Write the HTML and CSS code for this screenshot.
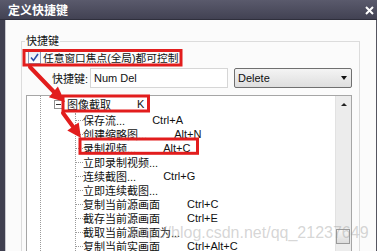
FILE: index.html
```html
<!DOCTYPE html>
<html lang="zh-CN">

<head>
    <meta charset="UTF-8">
    <meta name="viewport" content="width=device-width, initial-scale=1.0">
    <title>定义快捷键</title>
    <link rel="stylesheet" href="styles.css">
</head>

<body>
    <div class="window">
        <div class="titlebar">
            <span class="title">定义快捷键</span>
            <svg class="close" width="9" height="9" viewBox="0 0 9 9">
                <path d="M1 1 L8 8 M8 1 L1 8" stroke="#fff" stroke-width="2" />
            </svg>
        </div>
        <div class="frame">
            <div class="content">
                <fieldset class="group">
                    <legend>快捷键</legend>
                    <div class="check-row">
                        <span class="checkbox">
                            <svg width="11" height="11" viewBox="0 0 11 11">
                                <path d="M2 5.5 L4.5 8.5 L9 2" stroke="#2a4fa8" stroke-width="1.6" fill="none" />
                            </svg>
                        </span>
                        <span>任意窗口焦点(全局)都可控制</span>
                    </div>
                    <div class="key-row">
                        <span class="key-label">快捷键:</span>
                        <div class="input">Num Del</div>
                        <div class="select">
                            <span>Delete</span>
                            <span class="arrow"></span>
                        </div>
                    </div>
                    <div class="tree">
                        <div class="tree-body">
                            <div class="root-row">
                                <span class="minus"></span>
                                <span class="root-name">图像截取</span>
                                <span class="root-key">K</span>
                            </div>
                            <div class="children">
                                <div class="node"><span>保存流...</span><span class="key">Ctrl+A</span></div>
                                <div class="node"><span>创建缩略图...</span><span class="key">Alt+N</span></div>
                                <div class="node"><span>录制视频...</span><span class="key">Alt+C</span></div>
                                <div class="node"><span>立即录制视频...</span></div>
                                <div class="node"><span>连续截图...</span><span class="key">Ctrl+G</span></div>
                                <div class="node"><span>立即连续截图...</span></div>
                                <div class="node"><span>复制当前源画面</span><span class="key">Ctrl+C</span></div>
                                <div class="node"><span>截存当前源画面</span><span class="key">Ctrl+E</span></div>
                                <div class="node"><span>截取当前源画面为...</span></div>
                                <div class="node"><span>复制当前实画面</span><span class="key">Ctrl+Alt+C</span></div>
                            </div>
                        </div>
                        <div class="scrollbar">
                            <div class="sb-up"><span class="up-arrow"></span></div>
                            <div class="sb-thumb"></div>
                        </div>
                    </div>
                </fieldset>
            </div>
        </div>

        <!-- red annotations drawn over the dialog -->
        <svg class="marks" width="377" height="251" viewBox="0 0 377 251">
            <g fill="none" stroke="#e21d1d" stroke-width="3">
                <rect x="24" y="50.5" width="157" height="14.5" />
                <rect x="63" y="96" width="85.5" height="15" />
                <rect x="80" y="139" width="117.5" height="14.3" />
            </g>
            <g stroke="#e21d1d" stroke-width="4" stroke-linecap="round">
                <line x1="30" y1="67" x2="55" y2="93" />
                <line x1="63" y1="113" x2="74" y2="128" />
            </g>
            <g fill="#e21d1d">
                <polygon points="65,102 48.9,97.2 57.9,86.6" />
                <polygon points="81,138 67.3,130.5 78.7,122.5" />
            </g>
        </svg>

        <div class="watermark">http://blog.csdn.net/qq_21237649</div>
    </div>
</body>

</html>
```

FILE: styles.css
```css
body {
    margin: 0;
    font-family: "Liberation Sans", "Noto Sans CJK SC", sans-serif;
    font-size: 11px;
    color: #111;
}

.window {
    position: relative;
    width: 377px;
    height: 251px;
    overflow: hidden;
    background-color: #fbfbfb;
    display: flex;
    flex-direction: column;
}

.titlebar {
    height: 19px;
    flex: none;
    display: flex;
    align-items: center;
    justify-content: space-between;
    padding: 0 3px 0 8px;
    background: linear-gradient(#5a5a6c, #424253);
    border-bottom: 1px solid #2f2f3c;
}

.title {
    color: #fff;
    font-size: 12px;
    font-weight: bold;
}

.close {
    margin-top: 2px;
}

.frame {
    flex: 1;
    display: flex;
    border-left: 5px solid #404050;
    border-right: 1px solid #55555f;
}

.content {
    flex: 1;
    border-left: 1px solid #c9c9cf;
    padding-left: 15px;
}

.group {
    box-sizing: border-box;
    width: 339px;
    margin: 13px 0 0 0;
    padding: 1px 7px 0 4px;
    border: 1px solid #dcdcdc;
    border-bottom: none;
    min-width: 0;
}

.group legend {
    padding: 0 1px;
    margin-left: -1px;
    line-height: 16px;
    font-size: 11px;
}

.check-row {
    height: 15px;
    display: flex;
    align-items: center;
    font-size: 10.7px;
}

.checkbox {
    box-sizing: border-box;
    width: 13px;
    height: 13px;
    margin: 0 2px 0 2px;
    border: 1px solid #8a9bb5;
    background: linear-gradient(#e9eef6, #fff);
    display: flex;
    align-items: center;
    justify-content: center;
}

.key-row {
    display: flex;
    align-items: center;
    height: 20px;
    margin-top: 3px;
}

.key-label {
    margin-left: 26px;
    width: 38px;
}

.input {
    box-sizing: border-box;
    width: 138px;
    height: 20px;
    line-height: 18px;
    padding-left: 3px;
    border: 1px solid #d6d6d6;
    background-color: #fff;
}

.select {
    box-sizing: border-box;
    width: 118px;
    height: 20px;
    margin-left: 6px;
    padding: 0 4px 0 3px;
    border: 1px solid #707070;
    border-radius: 2px;
    background: linear-gradient(#f4f4f4, #dedede);
    display: flex;
    align-items: center;
    justify-content: space-between;
}

.arrow {
    width: 0;
    height: 0;
    border-left: 3.5px solid transparent;
    border-right: 3.5px solid transparent;
    border-top: 4px solid #111;
}

.tree {
    box-sizing: border-box;
    width: 326px;
    height: 170px;
    margin-top: 7px;
    border: 1px solid #a6a6a6;
    background-color: #fff;
    display: flex;
}

.tree-body {
    flex: 1;
    background-image: repeating-linear-gradient(to bottom, #9a9a9a 0 1px, transparent 1px 2px),
        repeating-linear-gradient(to bottom, #9a9a9a 0 1px, transparent 1px 2px);
    background-size: 1px 100%, 1px 4px;
    background-position: 13px 0, 31px 0;
    background-repeat: no-repeat;
}

.root-row {
    height: 16px;
    display: flex;
    align-items: center;
    padding-left: 27px;
}

.minus {
    box-sizing: border-box;
    width: 9px;
    height: 9px;
    border: 1px solid #919191;
    background: linear-gradient(#333, #333) center / 5px 1px no-repeat, #fff;
}

.root-name {
    margin-left: 4px;
}

.root-key {
    margin-left: 26px;
}

.children {
    margin: 1px 0 0 48px;
    border-left: 1px dotted #9a9a9a;
}

.node {
    height: 14px;
    display: flex;
    align-items: center;
}

.node::before {
    content: "";
    width: 7px;
    border-top: 1px dotted #9a9a9a;
}

.key {
    margin-left: 27px;
}

.scrollbar {
    width: 15px;
    flex: none;
    background-color: #ececec;
    border-left: 1px solid #e2e2e2;
}

.sb-up {
    height: 16px;
    display: flex;
    align-items: center;
    justify-content: center;
}

.up-arrow {
    width: 0;
    height: 0;
    border-left: 3px solid transparent;
    border-right: 3px solid transparent;
    border-bottom: 3px solid #222;
}

.sb-thumb {
    box-sizing: border-box;
    width: 14px;
    height: 15px;
    margin: 117px 0 0 0;
    border: 1px solid #9a9a9a;
    background: linear-gradient(#f7f7f7, #dcdcdc);
}

.marks {
    position: absolute;
    left: 0;
    top: 0;
    pointer-events: none;
}

.watermark {
    position: absolute;
    left: 131px;
    top: 224px;
    font-size: 16px;
    color: rgba(150, 150, 150, 0.4);
    white-space: nowrap;
    pointer-events: none;
}
```
